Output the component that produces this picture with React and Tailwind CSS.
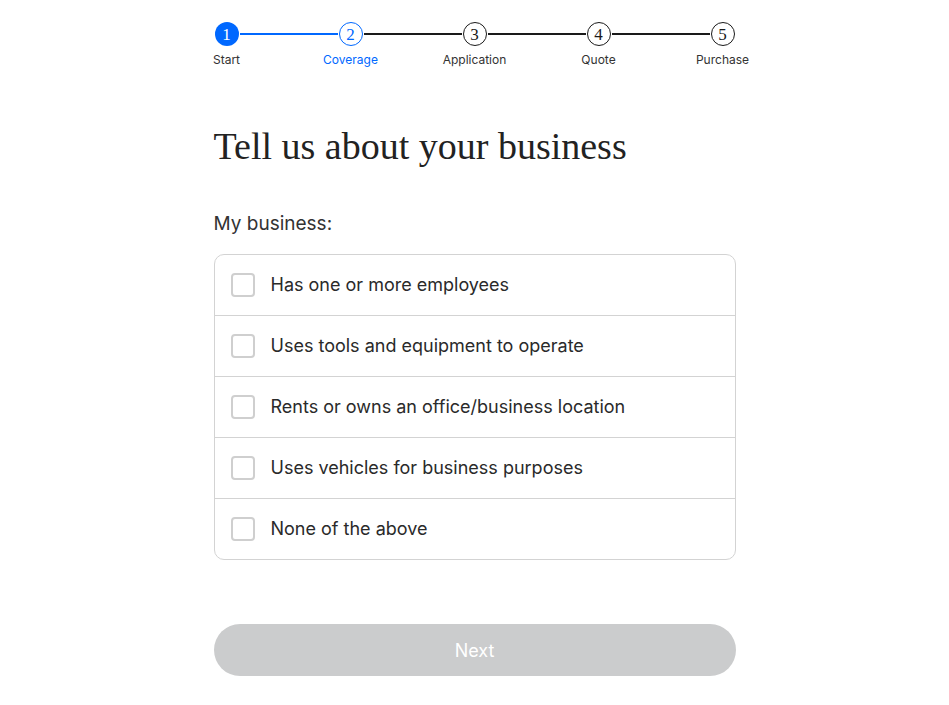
import { useState } from 'react';

const steps = ['Start', 'Coverage', 'Application', 'Quote', 'Purchase'];

const options = [
  'Has one or more employees',
  'Uses tools and equipment to operate',
  'Rents or owns an office/business location',
  'Uses vehicles for business purposes',
  'None of the above',
];

function Stepper() {
  return (
    <div className="flex items-start pt-[22px]">
      {steps.map((label, i) => {
        const done = i === 0;
        const current = i === 1;
        return (
          <div key={label} className={i < steps.length - 1 ? 'flex flex-1 items-start' : 'flex items-start'}>
            <div className="flex w-[26px] flex-col items-center">
              <div
                className={
                  done
                    ? 'flex h-[24px] w-[24px] items-center justify-center rounded-full bg-[#0068ff] text-white'
                    : current
                    ? 'flex h-[24px] w-[24px] items-center justify-center rounded-full border-[1.5px] border-[#0068ff] bg-white text-[#0068ff]'
                    : 'flex h-[24px] w-[24px] items-center justify-center rounded-full border-[1.5px] border-[#1a1a1a] bg-white text-[#1a1a1a]'
                }
                style={{ fontFamily: '"Liberation Serif", "DejaVu Serif", serif' }}
              >
                <span className="text-[17px] leading-none">{i + 1}</span>
              </div>
              <span
                className={
                  'mt-[7px] whitespace-nowrap text-[12px] leading-[14px] ' +
                  (current ? 'text-[#0068ff]' : 'text-[#333]')
                }
              >
                {label}
              </span>
            </div>
            {i < steps.length - 1 && (
              <div
                className={
                  'mt-[11px] h-[2px] flex-1 ' + (done ? 'bg-[#0068ff]' : 'bg-[#1a1a1a]')
                }
              />
            )}
          </div>
        );
      })}
    </div>
  );
}

export default function App() {
  const [checked, setChecked] = useState([]);

  const toggle = (i) =>
    setChecked((c) => (c.includes(i) ? c.filter((x) => x !== i) : [...c, i]));

  return (
    <div
      className="min-h-[705px] bg-white"
      style={{ fontFamily: 'Inter, "Noto Sans", sans-serif' }}
    >
      <div className="mx-auto w-[522px]">
        <Stepper />

        <h1
          className="mt-[58px] text-[38px] leading-[42px] text-[#222]"
          style={{ fontFamily: '"Liberation Serif", "DejaVu Serif", serif' }}
        >
          Tell us about your business
        </h1>

        <p className="mt-[45px] text-[19px] leading-[24px] text-[#333]">My business:</p>

        <div className="mt-[18px] overflow-hidden rounded-[10px] border border-[#d3d3d3]">
          {options.map((opt, i) => (
            <label
              key={opt}
              className={
                'flex cursor-pointer items-center gap-[16px] px-[16px] ' +
                (i > 0 ? 'h-[61px] border-t border-[#d3d3d3]' : 'h-[60px]')
              }
            >
              <input
                type="checkbox"
                checked={checked.includes(i)}
                onChange={() => toggle(i)}
                className="sr-only"
              />
              <span
                className={
                  'h-[24px] w-[24px] shrink-0 rounded-[4px] border-2 ' +
                  (checked.includes(i) ? 'border-[#0068ff] bg-[#0068ff]' : 'border-[#cfcfcf] bg-white')
                }
              />
              <span className="text-[18px] leading-[24px] text-[#2a2a2a]">{opt}</span>
            </label>
          ))}
        </div>

        <button
          disabled={checked.length === 0}
          className="mt-[64px] h-[52px] w-full rounded-full bg-[#cbcccd] text-[18px] text-white"
        >
          Next
        </button>
      </div>
    </div>
  );
}
